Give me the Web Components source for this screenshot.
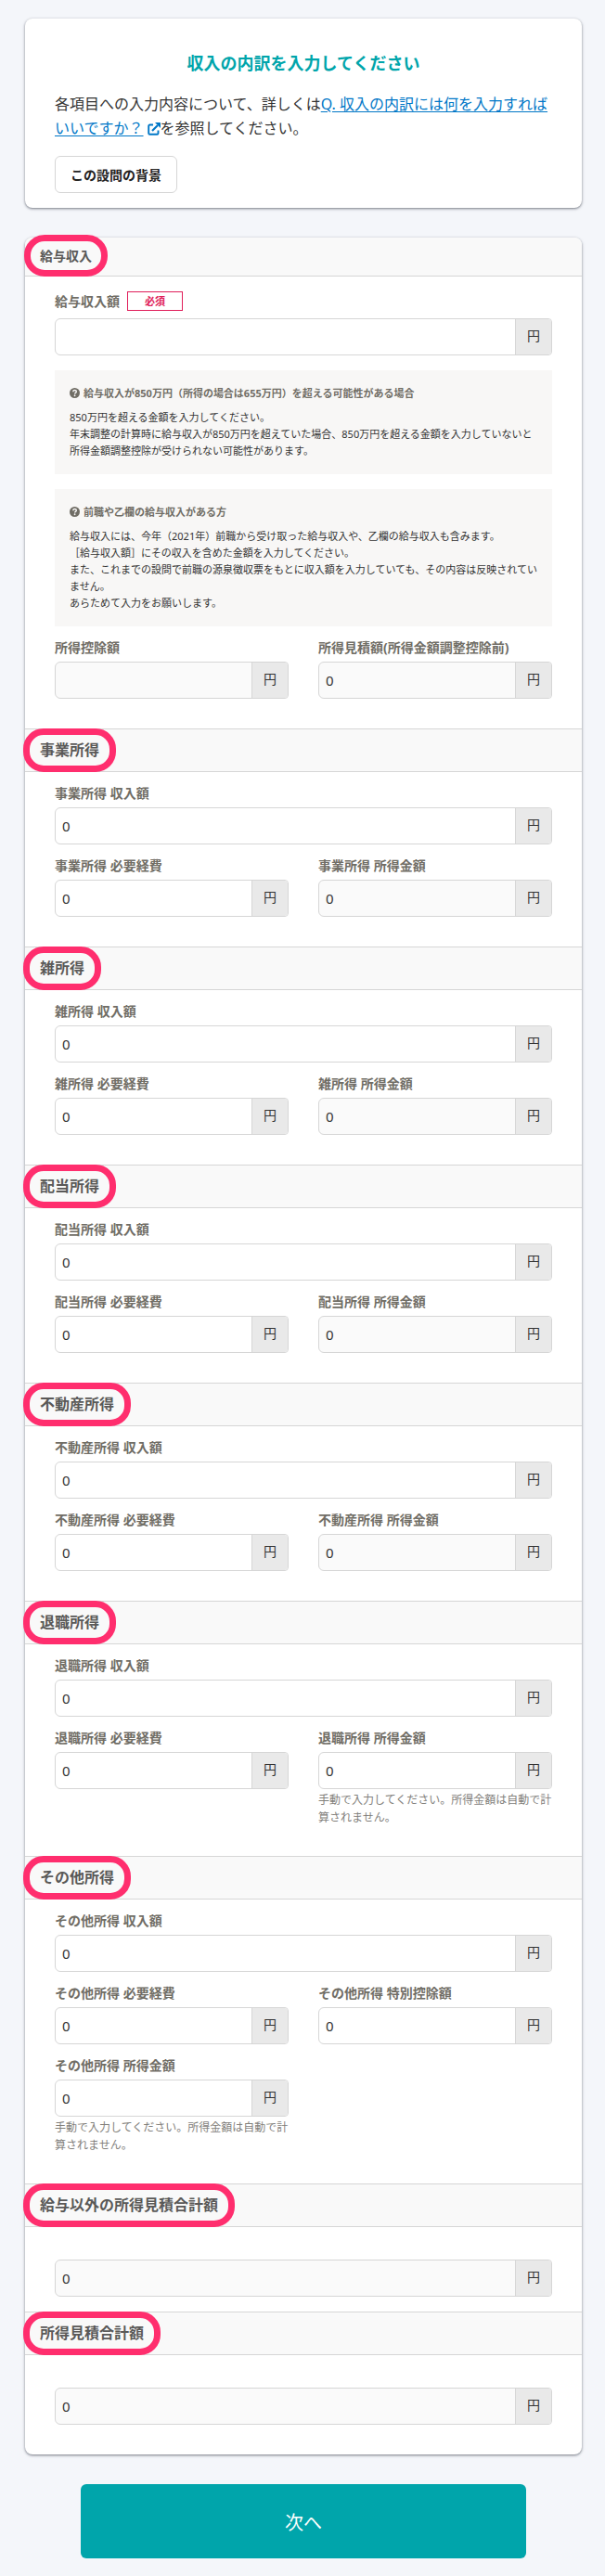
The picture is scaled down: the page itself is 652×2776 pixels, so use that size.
<!DOCTYPE html>
<html lang="ja">
<head>
<meta charset="utf-8">
<meta name="viewport" content="width=device-width, initial-scale=1">
<title>収入の内訳</title>
<style>
  body {
    margin: 0;
    padding: 20px 25px 19px 27px;
    background: #f4f6fa;
    color: #333;
    font-family: "Noto Sans", "Noto Sans CJK JP", sans-serif;
    font-size: 14px;
  }
</style>
</head>
<body>
<income-page></income-page>
<script>
const define = (name, html, setup) => {
  const template = document.createElement('template');
  template.innerHTML = html;
  customElements.define(name, class extends HTMLElement {
    constructor() {
      super();
      this.attachShadow({ mode: 'open' }).append(template.content.cloneNode(true));
    }
    connectedCallback() {
      if (setup) setup(this, this.shadowRoot);
    }
  });
};

define('ui-card', `
  <style>
    :host { display: block; background: #fff; border-radius: 8px;
      box-shadow: 0 1px 3px 1px rgba(60,64,80,.2), 0 1px 2px rgba(30,34,50,.4); }
  </style>
  <slot></slot>`);

define('intro-panel', `
  <style>
    :host { display: block; padding: 32px 32px 16px; }
    h1 { margin: 0 0 15px; font-size: 18px; line-height: 32px; font-weight: 700; text-align: center; color: #00a5ab; }
    p { margin: 0 0 17px; font-size: 16px; line-height: 26px; color: #333; }
    a { color: #0077c7; text-decoration: underline; text-underline-offset: 2px; }
    svg { display: inline-block; width: 14px; height: 14px; margin-left: 4px; vertical-align: -2px; fill: none; stroke: currentColor; }
    button { height: 40px; padding: 0 16px; border: 1px solid #d6d6d6; border-radius: 6px; background: #fff;
      font: 700 14px "Noto Sans", "Noto Sans CJK JP", sans-serif; color: #23221f; }
  </style>
  <h1>収入の内訳を入力してください</h1>
  <p>各項目への入力内容について、詳しくは<a href="#faq">Q. 収入の内訳には何を入力すればいいですか？<svg viewBox="0 0 14 14" aria-hidden="true"><path d="M6 2.5H2.5a1.3 1.3 0 0 0-1.3 1.3v7.7a1.3 1.3 0 0 0 1.3 1.3h7.7a1.3 1.3 0 0 0 1.3-1.3V8.5" stroke-width="1.9"/><path d="M5 9l6-6" stroke-width="2.2"/><path d="M8 0h5.4a.6.6 0 0 1 .6.6V6z" fill="currentColor" stroke="none"/></svg></a>を参照してください。</p>
  <button type="button">この設問の背景</button>`);

define('income-section', `
  <style>
    :host { display: block; }
    header { border: solid #d6d6d6; border-width: 1px 0; padding: 10px 16px; background: #f9f9f9; }
    :host([first]) header { border-top: 0; padding: 9px 16px 11px; border-radius: 8px 8px 0 0; }
    h2 { position: relative; width: fit-content; margin: 0; font-size: 16px; line-height: 25px; font-weight: 700; color: #5a5958; }
    :host([first]) h2 { font-size: 14px; line-height: 21px; }
    h2::after { content: ""; position: absolute; inset: -11px -18px; border: 7px solid #ff2e6e; border-radius: 22px; }
    :host([first]) h2::after { inset: -12px -17px; }
    .body { display: grid; grid-template-columns: 1fr 1fr; column-gap: 32px; padding: 0 32px 32px; }
    :host([total]) .body { padding-top: 35px; }
    :host([total]:not([last])) .body { padding-bottom: 16px; }
  </style>
  <header><h2></h2></header>
  <div class="body"><slot></slot></div>`,
  (host, root) => { root.querySelector('h2').textContent = host.getAttribute('heading'); });

define('yen-field', `
  <style>
    :host { display: block; min-width: 0; padding-top: 12px; }
    :host([wide]) { grid-column: 1 / -1; }
    :host([required]) { padding-top: 16px; }
    :host([bare]) { padding-top: 0; }
    .label { display: flex; align-items: center; gap: 8px; margin-bottom: 4px; line-height: 22px; font-weight: 700; color: #706d65; white-space: nowrap; }
    :host([required]) .label { margin-bottom: 8px; line-height: 21px; }
    :host([bare]) .label { display: none; }
    .badge { display: none; box-sizing: border-box; width: 60px; border: 1px solid #e01e5a; font-size: 11px; line-height: 19px; text-align: center; color: #e01e5a; }
    :host([required]) .badge { display: block; }
    .box { display: flex; height: 40px; box-sizing: border-box; border: 1px solid #d6d6d6; border-radius: 6px 4px 4px 6px; overflow: hidden; background: #fff; }
    :host([readonly]) .box { background: #fafafa; }
    input { flex: 1; min-width: 0; margin: 0; padding: 0 7px; border: 0; outline: 0; background: none; color: #333; font: 15px "Noto Sans", "Noto Sans CJK JP", sans-serif; }
    .unit { box-sizing: border-box; width: 39px; border-left: 1px solid #d6d6d6; background: #e9e9e9; line-height: 36px; text-align: center; }
    .help { margin: 2px 0 0; font-size: 12px; line-height: 19px; color: #82807b; }
    .help:empty { display: none; }
  </style>
  <div class="label"><label for="amount"></label><span class="badge">必須</span></div>
  <div class="box"><input id="amount" type="text" inputmode="numeric"><span class="unit">円</span></div>
  <p class="help"></p>`,
  (host, root) => {
    const input = root.querySelector('input');
    const name = host.getAttribute('label');
    if (host.hasAttribute('bare')) input.setAttribute('aria-label', name);
    else root.querySelector('label').textContent = name;
    input.value = host.getAttribute('value') ?? '0';
    input.readOnly = host.hasAttribute('readonly');
    input.required = host.hasAttribute('required');
    root.querySelector('.help').textContent = host.getAttribute('help') ?? '';
  });

define('hint-note', `
  <style>
    :host { display: block; grid-column: 1 / -1; margin-top: 16px; padding: 16px; background: #f8f7f6; font-size: 11px; line-height: 18px; }
    h3 { display: flex; align-items: center; gap: 4px; margin: 0 0 8px; font-size: 11px; line-height: 18px; font-weight: 700; color: #706d65; }
    svg { flex: none; width: 11px; height: 11px; margin-bottom: 2px; }
  </style>
  <h3><svg viewBox="0 0 16 16" aria-hidden="true"><circle cx="8" cy="8" r="8" fill="#706d65"/><path d="M5.4 6.1C5.5 4.5 6.5 3.7 8 3.7c1.600 0 2.700.9 2.700 2.200 0 1.900-2.500 1.900-2.500 3.600" fill="none" stroke="#f8f7f6" stroke-width="2"/><circle cx="8.100" cy="12" r="1.300" fill="#f8f7f6"/></svg><slot name="heading"></slot></h3>
  <slot></slot>`);

define('next-button', `
  <style>
    :host { display: block; width: 80%; margin: 32px auto 0; }
    button { display: block; width: 100%; height: 80px; border: 0; border-radius: 6px; background: #00a5ab; color: #fff; font: 400 20px "Noto Sans", "Noto Sans CJK JP", sans-serif; }
  </style>
  <button type="submit"><slot></slot></button>`);

const plainSection = name => `
  <income-section heading="${name}">
    <yen-field wide label="${name} 収入額"></yen-field>
    <yen-field label="${name} 必要経費"></yen-field>
    <yen-field readonly label="${name} 所得金額"></yen-field>
  </income-section>`;
const manual = '手動で入力してください。所得金額は自動で計算されません。';

define('income-page', `
  <style>
    :host { display: block; }
    ui-card + ui-card { margin-top: 32px; }
  </style>
  <ui-card><intro-panel></intro-panel></ui-card>
  <ui-card>
    <income-section first heading="給与収入">
      <yen-field wide required value="" label="給与収入額"></yen-field>
      <hint-note><span slot="heading">給与収入が850万円（所得の場合は655万円）を超える可能性がある場合</span>850万円を超える金額を入力してください。<br>年末調整の計算時に給与収入が850万円を超えていた場合、850万円を超える金額を入力していないと所得金額調整控除が受けられない可能性があります。</hint-note>
      <hint-note><span slot="heading">前職や乙欄の給与収入がある方</span>給与収入には、今年（2021年）前職から受け取った給与収入や、乙欄の給与収入も含みます。<br>［給与収入額］にその収入を含めた金額を入力してください。<br>また、これまでの設問で前職の源泉徴収票をもとに収入額を入力していても、その内容は反映されていません。<br>あらためて入力をお願いします。</hint-note>
      <yen-field readonly value="" label="所得控除額"></yen-field>
      <yen-field readonly label="所得見積額(所得金額調整控除前)"></yen-field>
    </income-section>
    ${['事業所得', '雑所得', '配当所得', '不動産所得'].map(plainSection).join('')}
    <income-section heading="退職所得">
      <yen-field wide label="退職所得 収入額"></yen-field>
      <yen-field label="退職所得 必要経費"></yen-field>
      <yen-field label="退職所得 所得金額" help="${manual}"></yen-field>
    </income-section>
    <income-section heading="その他所得">
      <yen-field wide label="その他所得 収入額"></yen-field>
      <yen-field label="その他所得 必要経費"></yen-field>
      <yen-field label="その他所得 特別控除額"></yen-field>
      <yen-field label="その他所得 所得金額" help="${manual}"></yen-field>
    </income-section>
    <income-section total heading="給与以外の所得見積合計額">
      <yen-field wide bare readonly label="給与以外の所得見積合計額"></yen-field>
    </income-section>
    <income-section total last heading="所得見積合計額">
      <yen-field wide bare readonly label="所得見積合計額"></yen-field>
    </income-section>
  </ui-card>
  <next-button>次へ</next-button>`);
</script>
</body>
</html>
